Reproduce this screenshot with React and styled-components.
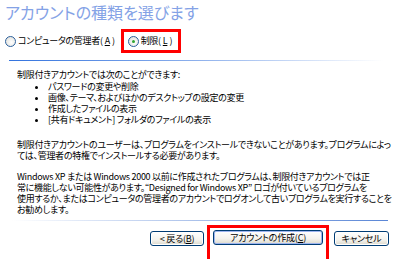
import React from "react";
import styled, { createGlobalStyle } from "styled-components";

const GlobalStyle = createGlobalStyle`
  html, body {
    margin: 0;
    padding: 0;
    background: #fff;
  }
  body {
    font-family: "Noto Sans CJK JP", "Liberation Sans", sans-serif;
    font-feature-settings: "palt";
  }
`;

const Page = styled.div`
  width: 394px;
  height: 259px;
  overflow: hidden;
  background: #fff;
  display: flex;
  flex-direction: column;
`;

const Title = styled.h1`
  margin: 0;
  padding: 3px 0 0 5px;
  font-size: 16px;
  line-height: 19px;
  font-weight: 400;
  color: #84a2e6;
`;

const RadioRow = styled.div`
  display: flex;
  align-items: center;
  gap: 6px;
  padding: 7px 0 0 5px;
  height: 24px;
`;

const Highlight = styled.div`
  display: flex;
  align-items: center;
  border: 3px solid #ff0000;
  padding: ${(p) => p.$pad || "0 3px"};
  height: ${(p) => p.$h || "auto"};
  box-sizing: border-box;
`;

const RadioLabel = styled.label`
  display: flex;
  align-items: center;
  gap: 2px;
  font-size: 9px;
  letter-spacing: -0.3px;
  line-height: 12px;
  color: #000;
`;

const RadioCircle = styled.span`
  width: 9px;
  height: 9px;
  border-radius: 50%;
  border: 1px solid #2b5f9c;
  background: radial-gradient(circle at 60% 60%, #ffffff 0%, #dcdcd6 100%);
  display: flex;
  align-items: center;
  justify-content: center;
  &::after {
    content: "";
    width: 3px;
    height: 3px;
    border-radius: 50%;
    background: ${(p) => (p.$checked ? "#2fa531" : "transparent")};
  }
`;

const Divider = styled.div`
  height: 1px;
  margin: ${(p) => p.$margin};
  background: ${(p) =>
    p.$reverse
      ? "linear-gradient(to right, #ffffff 0%, #a9c0ea 50%, #5a86d6 100%)"
      : "linear-gradient(to right, #3373de 0%, #8db0ec 50%, #ffffff 100%)"};
`;

const Content = styled.div`
  padding: 8px 0 0 17px;
  font-size: 9px;
  letter-spacing: -0.3px;
  line-height: 11px;
  color: #000;
  flex: 1;
  white-space: nowrap;
`;

const Para = styled.p`
  margin: 0 0 ${(p) => p.$gap ?? 9}px 0;
`;

const BulletList = styled.ul`
  margin: 0 0 ${(p) => p.$gap ?? 9}px 0;
  padding: 0 0 0 31px;
  list-style: disc;
`;

const Footer = styled.div`
  display: flex;
  justify-content: flex-end;
  align-items: flex-start;
  padding: 4px 5px 0 0;
  height: 34px;
`;

const Button = styled.button`
  font-family: "Noto Sans CJK JP", "Liberation Sans", sans-serif;
  font-feature-settings: "palt";
  font-size: 9px;
  letter-spacing: -0.2px;
  line-height: 11px;
  height: 15px;
  width: ${(p) => p.$w}px;
  padding: 0;
  margin: ${(p) => p.$margin || "0"};
  border: 1px solid #003c74;
  border-radius: 3px;
  color: #000;
  background: linear-gradient(to bottom, #ffffff 0%, #f4f3ee 60%, #dcd9cc 100%);
  box-shadow: inset 0 0 0 1px ${(p) => (p.$default ? "#9db4ef" : "#ffffff")};
`;

export default function App() {
  return (
    <>
      <GlobalStyle />
      <Page>
        <Title>アカウントの種類を選びます</Title>
        <RadioRow>
          <RadioLabel>
            <RadioCircle />
            コンピュータの管理者(<u>A</u>)
          </RadioLabel>
          <Highlight $h="24px" $pad="0 6px 0 4px">
            <RadioLabel>
              <RadioCircle $checked />
              制限(<u>L</u>)
            </RadioLabel>
          </Highlight>
        </RadioRow>
        <Divider $margin="7px 11px 0 9px" />
        <Content>
          <Para $gap={1}>制限付きアカウントでは次のことができます:</Para>
          <BulletList $gap={14}>
            <li>パスワードの変更や削除</li>
            <li>画像、テーマ、およびほかのデスクトップの設定の変更</li>
            <li>作成したファイルの表示</li>
            <li>[共有ドキュメント] フォルダのファイルの表示</li>
          </BulletList>
          <Para $gap={10}>
            制限付きアカウントのユーザーは、プログラムをインストールできないことがあります。プログラムによっ
            <br />
            ては、管理者の特権でインストールする必要があります。
          </Para>
          <Para $gap={0}>
            Windows XP または Windows 2000 以前に作成されたプログラムは、制限付きアカウントでは正
            <br />
            常に機能しない可能性があります。“Designed for Windows XP” ロゴが付いているプログラムを
            <br />
            使用するか、またはコンピュータの管理者のアカウントでログオンして古いプログラムを実行することを
            <br />
            お勧めします。
          </Para>
        </Content>
        <Divider $reverse $margin="0 6px 0 12px" />
        <Footer>
          <Button $w={54} $margin="6px 3px 0 0">
            &lt; 戻る(<u>B</u>)
          </Button>
          <Highlight $pad="2px 3px 14px 3px">
            <Button $w={110} $default>
              アカウントの作成(<u>C</u>)
            </Button>
          </Highlight>
          <Button $w={55} $margin="6px 0 0 5px">
            キャンセル
          </Button>
        </Footer>
      </Page>
    </>
  );
}
